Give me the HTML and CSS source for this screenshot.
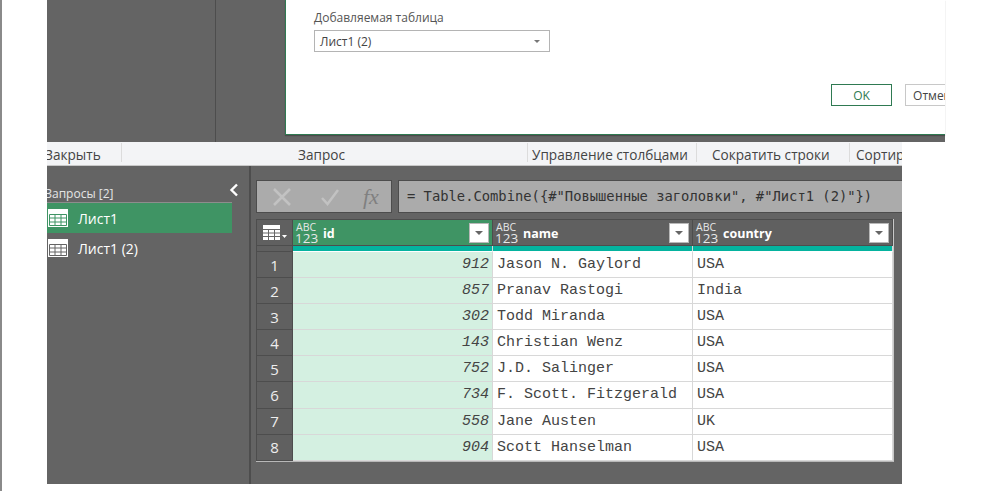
FILE: index.html
```html
<!DOCTYPE html>
<html lang="en">
<head>
  <meta charset="UTF-8">
  <title>Power Query</title>
  <link rel="stylesheet" href="styles.css">
</head>
<body>
  <div class="app">
    <div class="top">
      <div class="top-left"></div>
      <div class="dialog">
        <label class="field-label">Добавляемая таблица</label>
        <div class="select">
          <span>Лист1 (2)</span>
          <i class="select-arrow"></i>
        </div>
        <div class="dialog-buttons">
          <button class="btn btn-ok">OK</button>
          <button class="btn btn-cancel">Отмена</button>
        </div>
      </div>
    </div>

    <div class="ribbon">
      <div class="ribbon-group group-close"><span>Закрыть</span></div>
      <div class="ribbon-group group-query"><span>Запрос</span></div>
      <div class="ribbon-group group-cols"><span>Управление столбцами</span></div>
      <div class="ribbon-group group-rows"><span>Сократить строки</span></div>
      <div class="ribbon-group group-sort"><span>Сортировка</span></div>
    </div>

    <div class="main">
      <div class="queries">
        <div class="queries-head">
          <span class="queries-title">Запросы [2]</span>
          <svg class="collapse" width="10" height="14" viewBox="0 0 10 14"><path d="M8 1.500 2.500 7 8 12.500" fill="none" stroke="#fff" stroke-width="2.400"/></svg>
        </div>
        <div class="query active">
          <svg class="table-icon" width="20" height="20" viewBox="0 0 20 20"><rect y="1" width="20" height="18" fill="#fff"/><path d="M1.500 6.500h17v11h-17zM1.500 10h17M1.500 14h17M7 6.500v11M13 6.500v11" fill="none" stroke="#3f9464"/></svg>
          <span>Лист1</span>
        </div>
        <div class="query">
          <svg class="table-icon" width="20" height="20" viewBox="0 0 20 20"><rect y="1" width="20" height="18" fill="#fff"/><path d="M1.500 6.500h17v11h-17zM1.500 10h17M1.500 14h17M7 6.500v11M13 6.500v11" fill="none" stroke="#646464"/></svg>
          <span>Лист1 (2)</span>
        </div>
      </div>

      <div class="content">
        <div class="formula-row">
          <div class="formula-btns">
            <svg width="18" height="18" viewBox="0 0 18 18"><path d="M1 1 17 17M17 1 1 17" stroke="#c2c2c2" stroke-width="2.500"/></svg>
            <svg width="18" height="18" viewBox="0 0 18 18"><path d="M1 10 6.500 16 17 2" fill="none" stroke="#c2c2c2" stroke-width="2.500"/></svg>
            <span class="fx">fx</span>
          </div>
          <div class="formula">= Table.Combine({#"Повышенные заголовки", #"Лист1 (2)"})</div>
        </div>

        <div class="grid">
          <div class="head corner">
            <svg width="24" height="16" viewBox="0 0 24 16"><rect width="17" height="15" fill="#fff"/><path d="M0 4.500h17M0 8h17M0 11.500h17M5.500 4v11M11.500 4v11" fill="none" stroke="#666"/><path d="M19 10h5l-2.500 3z" fill="#fff"/></svg>
          </div>
          <div class="head selected">
            <span class="type"><b>ABC</b><b>123</b></span><span class="col-name">id</span><span class="filter"><i></i></span>
          </div>
          <div class="head">
            <span class="type"><b>ABC</b><b>123</b></span><span class="col-name">name</span><span class="filter"><i></i></span>
          </div>
          <div class="head">
            <span class="type"><b>ABC</b><b>123</b></span><span class="col-name">country</span><span class="filter"><i></i></span>
          </div>

          <div class="strip-corner"></div>
          <div class="strip"></div>
          <div class="strip"></div>
          <div class="strip"></div>

          <div class="num">1</div><div class="cell id">912</div><div class="cell">Jason N. Gaylord</div><div class="cell">USA</div>
          <div class="num">2</div><div class="cell id">857</div><div class="cell">Pranav Rastogi</div><div class="cell">India</div>
          <div class="num">3</div><div class="cell id">302</div><div class="cell">Todd Miranda</div><div class="cell">USA</div>
          <div class="num">4</div><div class="cell id">143</div><div class="cell">Christian Wenz</div><div class="cell">USA</div>
          <div class="num">5</div><div class="cell id">752</div><div class="cell">J.D. Salinger</div><div class="cell">USA</div>
          <div class="num">6</div><div class="cell id">734</div><div class="cell">F. Scott. Fitzgerald</div><div class="cell">USA</div>
          <div class="num">7</div><div class="cell id">558</div><div class="cell">Jane Austen</div><div class="cell">UK</div>
          <div class="num">8</div><div class="cell id">904</div><div class="cell">Scott Hanselman</div><div class="cell">USA</div>
        </div>
      </div>
    </div>
  </div>
</body>
</html>
```

FILE: styles.css
```css
html, body {
  margin: 0;
  height: 100%;
  overflow: hidden;
}

body {
  background: #fff;
  border-left: 2px solid #8a8a8a;
  font-family: "Open Sans", "Noto Sans", sans-serif;
  color: #444;
}

.app {
  margin-left: 45px;
  width: 898px;
}

/* Top: dialog over the dark background */
.top {
  display: flex;
  height: 142px;
  background: #646464;
}

.top-left {
  width: 168px;
  border-right: 1px solid #4d4d4d;
}

.dialog {
  box-sizing: border-box;
  width: 660px;
  height: 135px;
  margin-left: 69px;
  padding: 10px 0 0 28px;
  background: #fff;
  border-left: 1px solid #2f7a52;
  border-bottom: 1px solid #2f7a52;
  box-shadow: 0 1px 1px rgba(0, 0, 0, 0.25);
  overflow: hidden;
  display: flex;
  flex-direction: column;
}

.field-label {
  font-size: 12px;
  line-height: 16px;
  color: #555;
}

.select {
  box-sizing: border-box;
  display: flex;
  align-items: center;
  justify-content: space-between;
  width: 236px;
  height: 22px;
  margin-top: 4px;
  padding: 0 9px 0 5px;
  border: 1px solid #b4b4b4;
  font-size: 12px;
}

.select-arrow {
  border: 3px solid transparent;
  border-top: 3px solid #777;
  border-bottom: 0;
}

.dialog-buttons {
  display: flex;
  gap: 13px;
  margin: 32px 0 0 517px;
}

.btn {
  flex: none;
  box-sizing: border-box;
  width: 61px;
  height: 22px;
  padding: 0;
  background: #fff;
  font-family: inherit;
  font-size: 12px;
  color: #444;
}

.btn-ok {
  border: 1px solid #2f7a52;
  color: #2f7a52;
}

.btn-cancel {
  border: 1px solid #c8c8c8;
}

/* Ribbon labels */
.ribbon {
  display: flex;
  width: 855px;
  height: 24px;
  background: #f3f4f6;
  border-bottom: 1px solid #c8c8c8;
  box-sizing: border-box;
  overflow: hidden;
  font-size: 13.6px;
  line-height: 25px;
  color: #444;
}

.ribbon-group {
  flex: none;
  box-sizing: border-box;
  position: relative;
  white-space: nowrap;
}

.ribbon-group::after {
  content: "";
  position: absolute;
  right: 0;
  top: 1px;
  height: 19px;
  width: 1px;
  background: #dcdcdc;
}

.group-close { width: 75px; }
.group-close span { margin-left: -2px; }
.group-query { width: 406px; padding-left: 176px; }
.group-cols { width: 169px; padding-left: 4px; }
.group-rows { width: 153px; padding-left: 15px; }
.group-sort { width: 52px; padding-left: 6px; overflow: hidden; }
.group-sort::after { display: none; }

/* Main area */
.main {
  display: flex;
  width: 855px;
  height: 318px;
  background: #646464;
  overflow: hidden;
}

.queries {
  flex: none;
  box-sizing: border-box;
  width: 204px;
  border-right: 2px solid #4d4d4d;
  padding-top: 16px;
}

.queries-head {
  display: flex;
  align-items: center;
  justify-content: space-between;
  width: 185px;
  height: 20px;
  border-bottom: 1px solid #8d8d8d;
  font-size: 12px;
  color: #e4e4e4;
}

.queries-title {
  margin-left: -2px;
  padding-top: 3px;
}

.collapse {
  margin-right: -7px;
  margin-top: -5px;
}

.query {
  display: flex;
  align-items: center;
  gap: 10px;
  width: 185px;
  height: 30px;
  padding-left: 1px;
  box-sizing: border-box;
  font-size: 14px;
  color: #fff;
}

.query.active {
  background: #3f9464;
}

.table-icon {
  flex: none;
}

.content {
  flex: 1;
  min-width: 0;
  padding: 14px 0 0 5px;
}

.formula-row {
  display: flex;
  gap: 6px;
  height: 33px;
}

.formula-btns {
  flex: none;
  box-sizing: border-box;
  width: 136px;
  display: flex;
  align-items: center;
  gap: 30px;
  padding-left: 16px;
  background: #ababab;
  border: 1px solid #4d4d4d;
}

.fx {
  margin-left: -6px;
  font-family: "Liberation Serif", serif;
  font-style: italic;
  font-size: 22px;
  color: #808080;
}

.formula {
  flex: 1;
  box-sizing: border-box;
  min-width: 0;
  padding-left: 8px;
  background: #ababab;
  border: 1px solid #4d4d4d;
  border-right: 0;
  font-family: "DejaVu Sans Mono", monospace;
  font-size: 13.8px;
  line-height: 31px;
  white-space: nowrap;
  overflow: hidden;
  color: #333;
}

/* Data grid */
.grid {
  display: grid;
  grid-template-columns: 37px 200px 200px 200px;
  grid-template-rows: 27px 6px repeat(8, 26.1px);
  width: 638px;
  margin-top: 6px;
  border-right: 1px solid #c8c8c8;
  border-bottom: 1px solid #b8b8b8;
  box-sizing: border-box;
}

.head {
  display: flex;
  align-items: center;
  box-sizing: border-box;
  padding: 0 3px 0 2px;
  background: #606060;
  border: 1px solid #4d4d4d;
  border-left: 0;
  color: #fff;
  min-width: 0;
}

.head.corner {
  justify-content: center;
  border-left: 1px solid #4d4d4d;
  padding: 0;
}

.head.selected {
  background: #3f9464;
}

.type {
  display: flex;
  flex-direction: column;
  flex: none;
  width: 23px;
  color: #e8e8e8;
}

.type b {
  font-weight: 400;
}

.type b:first-child {
  font-size: 10.5px;
  line-height: 11px;
  padding-left: 1px;
}

.type b:last-child {
  font-size: 13.5px;
  line-height: 11px;
}

.col-name {
  flex: 1;
  margin-left: 5px;
  padding-top: 1px;
  font-size: 12.5px;
  font-weight: 700;
}

.filter {
  flex: none;
  display: flex;
  align-items: center;
  justify-content: center;
  box-sizing: border-box;
  width: 20px;
  height: 20px;
  background: #fff;
  border: 1px solid #b8b8b8;
}

.filter i {
  border: 4px solid transparent;
  border-top: 4px solid #666;
  border-bottom: 0;
}

.strip-corner {
  box-sizing: border-box;
  background: #606060;
  border: 1px solid #4d4d4d;
  border-top: 0;
}

.strip {
  background: #04b39f;
  border-right: 1px solid #d8d8d8;
  border-bottom: 1px solid #fff;
  box-sizing: border-box;
}

.num {
  display: flex;
  align-items: center;
  justify-content: center;
  box-sizing: border-box;
  background: #606060;
  border: 1px solid #4d4d4d;
  border-top: 0;
  font-size: 15px;
  color: #eee;
}

.cell {
  box-sizing: border-box;
  padding: 0 4px;
  background: #fff;
  border-right: 1px solid #d8d8d8;
  border-bottom: 1px solid #d8d8d8;
  font-family: "Liberation Mono", monospace;
  font-size: 15px;
  line-height: 26px;
  white-space: nowrap;
  color: #444;
}

.cell.id {
  background: #d4f0e1;
  text-align: right;
  font-style: italic;
  padding-right: 3px;
}
```
